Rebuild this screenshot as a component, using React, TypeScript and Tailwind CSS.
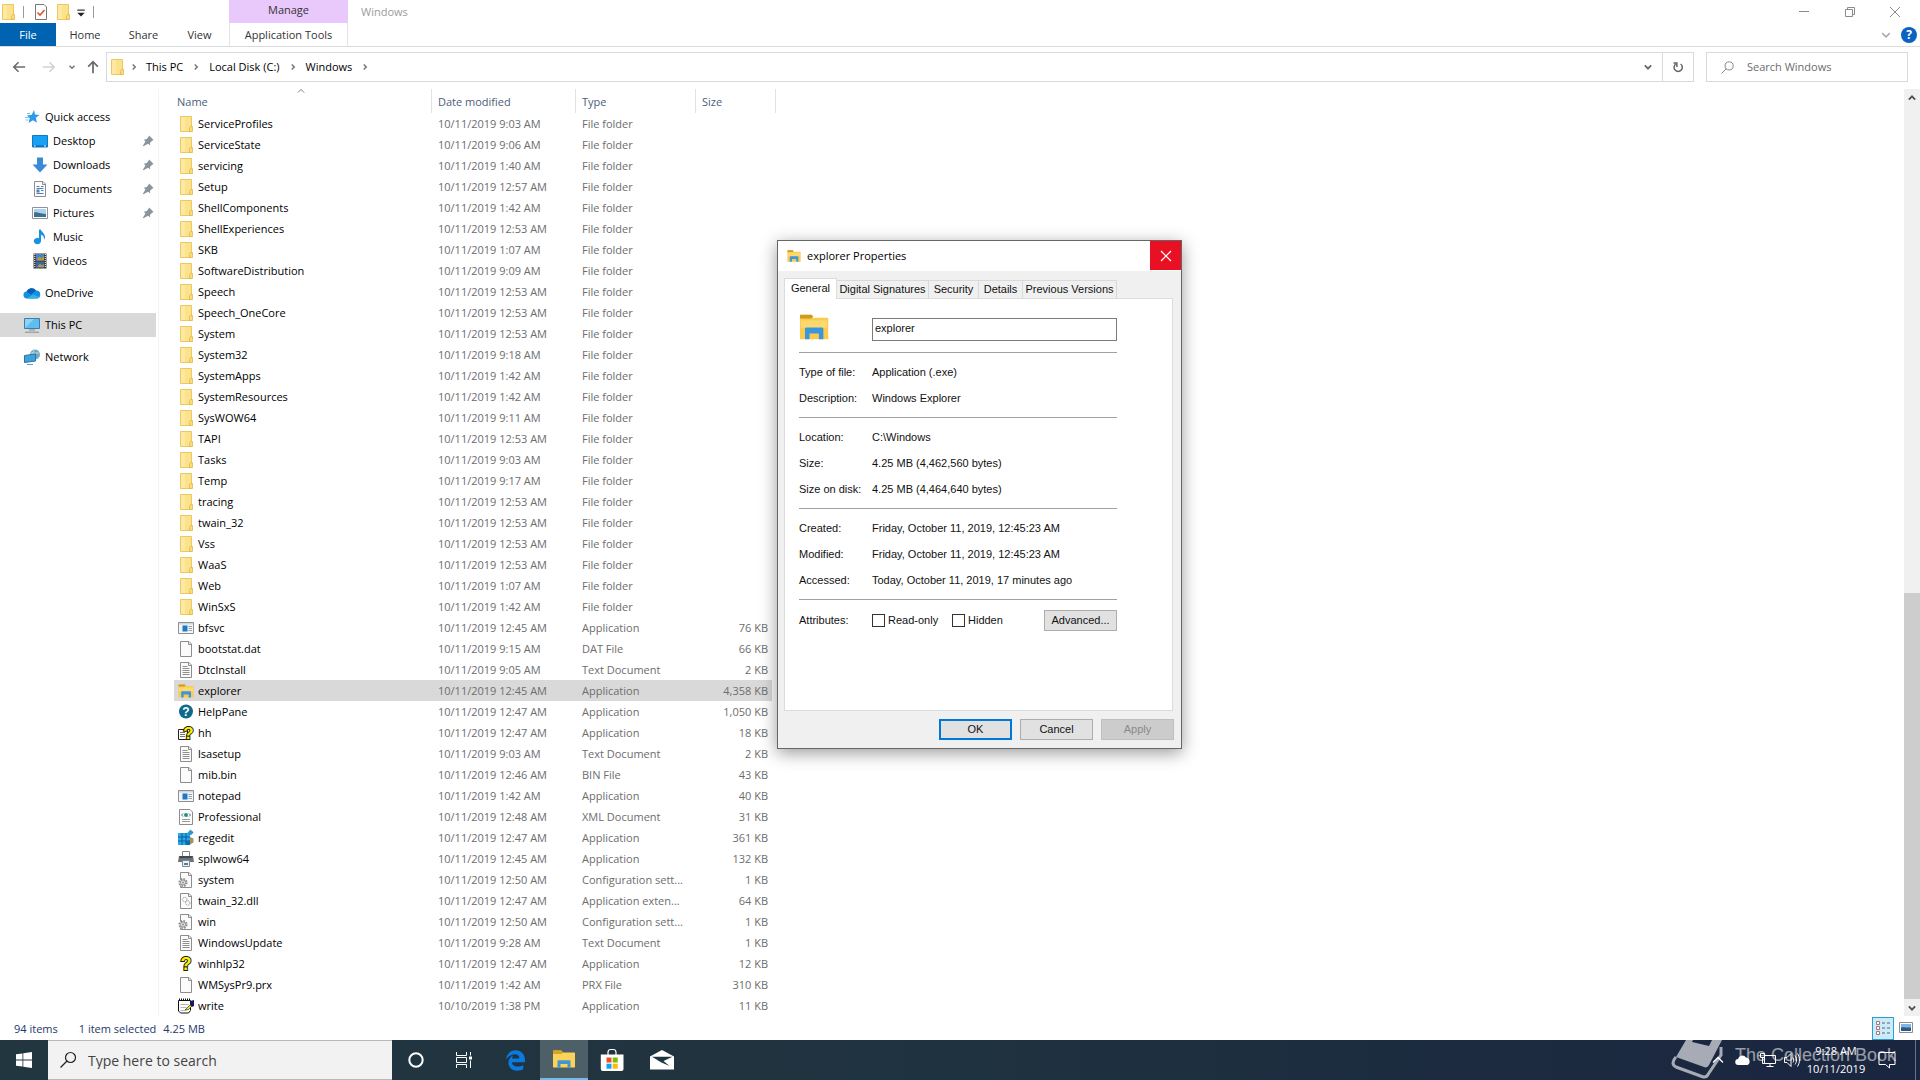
import type { ReactNode } from 'react';
import { FaEdgeLegacy } from 'react-icons/fa6';

type IconName =
  | 'folder' | 'app' | 'blank' | 'text' | 'explorer' | 'help' | 'hh' | 'xml'
  | 'regedit' | 'printer' | 'config' | 'dll' | 'question' | 'write';

type FileRow = { icon: IconName; name: string; date: string; type: string; size?: string };

const folder = (name: string, time: string): FileRow => ({
  icon: 'folder',
  name,
  date: `10/11/2019 ${time}`,
  type: 'File folder',
});

const files: FileRow[] = [
  folder('ServiceProfiles', '9:03 AM'),
  folder('ServiceState', '9:06 AM'),
  folder('servicing', '1:40 AM'),
  folder('Setup', '12:57 AM'),
  folder('ShellComponents', '1:42 AM'),
  folder('ShellExperiences', '12:53 AM'),
  folder('SKB', '1:07 AM'),
  folder('SoftwareDistribution', '9:09 AM'),
  folder('Speech', '12:53 AM'),
  folder('Speech_OneCore', '12:53 AM'),
  folder('System', '12:53 AM'),
  folder('System32', '9:18 AM'),
  folder('SystemApps', '1:42 AM'),
  folder('SystemResources', '1:42 AM'),
  folder('SysWOW64', '9:11 AM'),
  folder('TAPI', '12:53 AM'),
  folder('Tasks', '9:03 AM'),
  folder('Temp', '9:17 AM'),
  folder('tracing', '12:53 AM'),
  folder('twain_32', '12:53 AM'),
  folder('Vss', '12:53 AM'),
  folder('WaaS', '12:53 AM'),
  folder('Web', '1:07 AM'),
  folder('WinSxS', '1:42 AM'),
  { icon: 'app', name: 'bfsvc', date: '10/11/2019 12:45 AM', type: 'Application', size: '76 KB' },
  { icon: 'blank', name: 'bootstat.dat', date: '10/11/2019 9:15 AM', type: 'DAT File', size: '66 KB' },
  { icon: 'text', name: 'DtcInstall', date: '10/11/2019 9:05 AM', type: 'Text Document', size: '2 KB' },
  { icon: 'explorer', name: 'explorer', date: '10/11/2019 12:45 AM', type: 'Application', size: '4,358 KB' },
  { icon: 'help', name: 'HelpPane', date: '10/11/2019 12:47 AM', type: 'Application', size: '1,050 KB' },
  { icon: 'hh', name: 'hh', date: '10/11/2019 12:47 AM', type: 'Application', size: '18 KB' },
  { icon: 'text', name: 'lsasetup', date: '10/11/2019 9:03 AM', type: 'Text Document', size: '2 KB' },
  { icon: 'blank', name: 'mib.bin', date: '10/11/2019 12:46 AM', type: 'BIN File', size: '43 KB' },
  { icon: 'app', name: 'notepad', date: '10/11/2019 1:42 AM', type: 'Application', size: '40 KB' },
  { icon: 'xml', name: 'Professional', date: '10/11/2019 12:48 AM', type: 'XML Document', size: '31 KB' },
  { icon: 'regedit', name: 'regedit', date: '10/11/2019 12:47 AM', type: 'Application', size: '361 KB' },
  { icon: 'printer', name: 'splwow64', date: '10/11/2019 12:45 AM', type: 'Application', size: '132 KB' },
  { icon: 'config', name: 'system', date: '10/11/2019 12:50 AM', type: 'Configuration sett...', size: '1 KB' },
  { icon: 'dll', name: 'twain_32.dll', date: '10/11/2019 12:47 AM', type: 'Application exten...', size: '64 KB' },
  { icon: 'config', name: 'win', date: '10/11/2019 12:50 AM', type: 'Configuration sett...', size: '1 KB' },
  { icon: 'text', name: 'WindowsUpdate', date: '10/11/2019 9:28 AM', type: 'Text Document', size: '1 KB' },
  { icon: 'question', name: 'winhlp32', date: '10/11/2019 12:47 AM', type: 'Application', size: '12 KB' },
  { icon: 'blank', name: 'WMSysPr9.prx', date: '10/11/2019 1:42 AM', type: 'PRX File', size: '310 KB' },
  { icon: 'write', name: 'write', date: '10/10/2019 1:38 PM', type: 'Application', size: '11 KB' },
];

function Svg({ children, className = 'size-4' }: { children: ReactNode; className?: string }) {
  return (
    <svg viewBox="0 0 16 16" className={`${className} shrink-0 overflow-visible`} fill="none" aria-hidden="true">
      {children}
    </svg>
  );
}

function Chevron({ d, className, width = 2 }: { d: 'up' | 'down' | 'right'; className: string; width?: number }) {
  const paths = { up: 'M3 10.5 8 5.5l5 5', down: 'M3 5.5l5 5 5-5', right: 'M5.5 3l5 5-5 5' };
  return (
    <svg viewBox="0 0 16 16" className={`${className} shrink-0`} fill="none" aria-hidden="true">
      <path d={paths[d]} stroke="currentColor" strokeWidth={width} />
    </svg>
  );
}

function FolderIcon() {
  return (
    <Svg>
      <path d="M2.500 .5h11v15h-11z" fill="#fce28c" stroke="#ecc95f" />
      <path d="M3 1h4v14H3z" fill="#fde9a4" />
      <path d="M12.500 10.500h2v5h-3v-3z" fill="#fbdc77" stroke="#dfb84c" strokeWidth=".8" />
    </Svg>
  );
}

function ExplorerIcon({ className = 'size-4' }: { className?: string }) {
  return (
    <Svg className={className}>
      <path d="M.5 2.300c0-.6.3-.8.8-.8h5l1.200 1.500H15c.4 0 .6.3.6.700V14.500H.5z" fill="#fbcb4d" />
      <path d="M.5 1.900c0-.3.3-.500.600-.500h5.600l.9.900-1 1.200H.5z" fill="#cf9a1d" />
      <path d="M1 4.500h14v4H1z" fill="#fdd86f" />
      <path d="M3.200 14.500V9.200c0-.6.3-.9.900-.9h8c.6 0 .9.3.9.9v5.300h-2.400v-3H5.600v3z" fill="#3b97dd" />
    </Svg>
  );
}

function PageShape({ children }: { children?: ReactNode }) {
  return (
    <Svg>
      <path d="M2.500 .5h8.500l2.500 2.500v12.500h-11z" fill="#fbfbfb" stroke="#8d8d8d" />
      <path d="M10.500 .5v3h3" stroke="#8d8d8d" />
      {children}
    </Svg>
  );
}

function QuestionMark({ x, size }: { x: number; size: number }) {
  return (
    <text
      x={x}
      y="14"
      textAnchor="middle"
      fontFamily="Liberation Sans, sans-serif"
      fontWeight="700"
      fontSize={size}
      fill="#fff200"
      stroke="#1c1c00"
      strokeWidth="2"
      paintOrder="stroke"
    >
      ?
    </text>
  );
}

function FileIcon({ name }: { name: IconName }) {
  switch (name) {
    case 'folder':
      return <FolderIcon />;
    case 'explorer':
      return <ExplorerIcon />;
    case 'blank':
      return <PageShape />;
    case 'text':
      return (
        <PageShape>
          <path d="M4.500 4.500h5M4.500 6.500h7M4.500 8.500h7M4.500 10.500h7M4.500 12.500h7" stroke="#8f8f8f" />
        </PageShape>
      );
    case 'app':
      return (
        <Svg>
          <path d="M.5 2.500h15v11H.5z" fill="#f4f6f7" stroke="#8b9196" />
          <path d="M1 3h14v1.500H1z" fill="#cfd6dc" />
          <path d="M4.500 5.500h5v6h-5z" fill="#1f78c8" />
          <path d="M10.500 6.500h3.500M10.500 8.500h3.500M10.500 10.500h3.500" stroke="#8fa2b0" />
        </Svg>
      );
    case 'help':
      return (
        <Svg>
          <circle cx="8" cy="7.500" r="7" fill="#0d6a8a" />
          <text x="8" y="12" textAnchor="middle" fontFamily="Liberation Sans, sans-serif" fontWeight="700" fontSize="12" fill="#fff">?</text>
        </Svg>
      );
    case 'hh':
      return (
        <Svg>
          <path d="M.5 4.500h9v10h-9z" fill="#fff" stroke="#222" />
          <path d="M2 7.500h5M2 9.500h5M2 11.500h5" stroke="#777" />
          <QuestionMark x={10.500} size={17} />
        </Svg>
      );
    case 'question':
      return (
        <Svg>
          <QuestionMark x={8} size={18} />
        </Svg>
      );
    case 'xml':
      return (
        <Svg>
          <path d="M1.500 .5h10.500l2.500 2.500v12.500h-13z" fill="#fbfbfb" stroke="#8d8d8d" />
          <circle cx="8" cy="6" r="2" fill="#2f8f7c" />
          <path d="M5 4.500 3.500 6 5 7.500M11 4.500 12.500 6 11 7.500" stroke="#3b78a8" />
          <path d="M4 10.500h8M4 12.500h8" stroke="#9a9a9a" />
        </Svg>
      );
    case 'regedit':
      return (
        <Svg>
          <path d="M0 3h12v12H0z" fill="#28a8e8" />
          <path d="M4 3v12M8 3v12M0 7h12M0 11h12" stroke="#0b5e99" />
          <path d="m12.500 0 2.800 2.500-2.800 2.500L10 2.500z" fill="#2f9bd8" stroke="#0b5e99" strokeWidth=".5" />
          <path d="m12 7 3.500 1.500v4L12 14.500z" fill="#a89258" />
          <path d="M8 11h4v4H8z" fill="#0b6cae" />
        </Svg>
      );
    case 'printer':
      return (
        <Svg>
          <path d="M4.500 .5h7v5h-7z" fill="#fff" stroke="#888" />
          <path d="M1 5h14l1 6H0z" fill="#6d7378" />
          <path d="M1.500 5h13v2h-13z" fill="#44494d" />
          <path d="M4.500 9.500h7v6h-7z" fill="#e8f1f6" stroke="#888" />
          <path d="M6 12h4v2H6z" fill="#3f87b4" />
        </Svg>
      );
    case 'config':
      return (
        <PageShape>
          <circle cx="5" cy="10.500" r="3.700" fill="#eee" stroke="#8e8e8e" strokeWidth="1.800" strokeDasharray="1.600 1.300" />
          <circle cx="5" cy="10.500" r="2.600" fill="#e4e4e4" stroke="#8e8e8e" />
          <circle cx="5" cy="10.500" r="1" fill="#8e8e8e" />
        </PageShape>
      );
    case 'dll':
      return (
        <PageShape>
          <circle cx="6.800" cy="6.500" r="2.200" stroke="#93a0a8" strokeDasharray="1.300 .6" />
          <circle cx="9.800" cy="10" r="2.200" stroke="#93a0a8" strokeDasharray="1.300 .6" />
        </PageShape>
      );
    case 'write':
      return (
        <Svg>
          <path d="M.5 2.500h12v10l-2 2.500h-8l-2-2z" fill="#fff" stroke="#111" />
          <path d="M1 1.500h12" stroke="#111" strokeWidth="2" strokeDasharray="1 1" />
          <path d="M2.500 6.500h8M2.500 9.500h6M2.500 12.500h5" stroke="#b5b5b5" />
          <path d="m7 12 6-6 1.500 1.500-4 4z" fill="#f5e615" stroke="#111" strokeWidth=".6" />
          <path d="m12.500 3 3.500-1v6l-2 1-2-2z" fill="#17176e" />
        </Svg>
      );
  }
}

function PinIcon() {
  return (
    <svg viewBox="0 0 16 16" className="size-3 shrink-0" aria-hidden="true">
      <path d="M9.500 .5 15.500 6.500 13.500 7.500 11 10l-.5 3.500L8 11.500 2 15l-1-.5L4.500 8.500 2.500 6 6 5.500 8.500 2.500z" fill="#8b959d" />
    </svg>
  );
}

type NavItem = { label: string; icon: ReactNode; nested?: boolean; pinned?: boolean; active?: boolean };

const navGroups: NavItem[][] = [
  [
    {
      label: 'Quick access',
      icon: (
        <Svg>
          <path d="m10 1 1 4.500 4.500.5-3.700 2.800 1.200 5L9 11.200 4.500 14l1.300-5L3 6.500l4.800-.8z" fill="#2c9be8" />
          <path d="M1 8.500h4M1.500 11h3M3 4.500h3" stroke="#78c0f0" />
        </Svg>
      ),
    },
    {
      label: 'Desktop',
      nested: true,
      pinned: true,
      icon: (
        <Svg>
          <path d="M.5 2.500h15v11.500H.5z" fill="#18a0f5" stroke="#1277c4" />
          <path d="M1 13h14" stroke="#0b5fa5" />
          <path d="M2 13h1.500M12 13h2" stroke="#fff" />
        </Svg>
      ),
    },
    {
      label: 'Downloads',
      nested: true,
      pinned: true,
      icon: (
        <Svg>
          <path d="M5 .5h6v7h4.500L8 15.500.5 7.500H5z" fill="#3a8bd6" />
        </Svg>
      ),
    },
    {
      label: 'Documents',
      nested: true,
      pinned: true,
      icon: (
        <PageShape>
          <path d="M4.500 5.500h3M9 5.500h2.500M4.500 7.500h7M9 9.500h2.500M4.500 12.500h7" stroke="#4a84b8" />
          <path d="M4.500 8.500h3v3h-3z" fill="#4a84b8" />
        </PageShape>
      ),
    },
    {
      label: 'Pictures',
      nested: true,
      pinned: true,
      icon: (
        <Svg>
          <path d="M.5 2.500h15v11H.5z" fill="#fff" stroke="#8e9499" />
          <path d="M2 4h12v8H2z" fill="#a9d3ee" />
          <path d="M2 7.500c3-1 5 1 12 1.500v3H2z" fill="#3d6f8f" />
        </Svg>
      ),
    },
    {
      label: 'Music',
      nested: true,
      icon: (
        <Svg>
          <path d="M7 .5h1.800c.4 2.500 4.700 4 4.200 8.500-.3.8-.8 1.300-1 1.400.3-2.500-1.200-4-3-4.600V12a3.600 3.200 0 1 1-2-2.800z" fill="#1593e0" />
        </Svg>
      ),
    },
    {
      label: 'Videos',
      nested: true,
      icon: (
        <Svg>
          <path d="M1.500 .5h13v15h-13z" fill="#3a3a3a" />
          <path d="M4 1h8v6.500H4z" fill="#4a83c4" />
          <path d="M4 8.500h8V15H4z" fill="#3a63a8" />
          <path d="m5 6.500 2.500-3 2 2L12 3v4.500H5zM5 14l3-3.500 2 2 2-1.500v3z" fill="#b59b3b" />
          <path d="M2.800 1v14M13.300 1v14" stroke="#fff" strokeDasharray="1 1" />
        </Svg>
      ),
    },
  ],
  [
    {
      label: 'OneDrive',
      icon: (
        <Svg>
          <path d="M3.500 13.500A3.500 3.500 0 0 1 2.500 6.500 5.500 5.500 0 0 1 12 5.500 4 4 0 0 1 12.500 13.500z" fill="#1490df" />
          <path d="M2.500 6.500A5.500 5.500 0 0 1 12 5.500L7 9.500z" fill="#0a5fb4" />
          <path d="m3 13.500 6-4 6.500 2.500c-.5.900-1.600 1.500-3 1.500z" fill="#2eb1ee" />
        </Svg>
      ),
    },
  ],
  [
    {
      label: 'This PC',
      active: true,
      icon: (
        <Svg>
          <path d="M.5 1.500h15v10H.5z" fill="#5fbdf2" stroke="#3c7ea8" />
          <path d="M1 11V2h9z" fill="#8dd3f8" />
          <path d="M5 13h6M1 15.200h14" stroke="#8a8f93" />
        </Svg>
      ),
    },
  ],
  [
    {
      label: 'Network',
      icon: (
        <Svg>
          <circle cx="11" cy="5.500" r="5" fill="#6fa9c4" />
          <path d="M11 .5c-3 3-3 7 0 10M6.500 4h9" stroke="#c9e2ee" strokeWidth=".8" />
          <path d="M.5 6.500 11.500 5v7L.5 13.500z" fill="#3fa2dc" stroke="#2d749e" />
          <path d="M3 15.500h6" stroke="#57a4c9" />
        </Svg>
      ),
    },
  ],
];

const crumbs = ['This PC', 'Local Disk (C:)', 'Windows'];

function TitleBar() {
  return (
    <header className="grid grid-cols-[229px_119px_1fr] border-b border-[#dadbdc]">
      <div>
        <div className="flex h-[23px] items-center">
          <FolderIcon />
          <span className="ml-[7px] h-3 w-px bg-[#9a9a9a]" />
          <button type="button" aria-label="Properties" className="ml-[9px]">
            <Svg>
              <path d="M2.500 .5h8.500l2.500 2.500v12.500h-11z" fill="#fff" stroke="#777" />
              <path d="m4.500 8.500 2.500 2.500 4.500-5" stroke="#d8552c" strokeWidth="1.600" />
            </Svg>
          </button>
          <button type="button" aria-label="New folder" className="ml-[6px]">
            <FolderIcon />
          </button>
          <button type="button" aria-label="Customize toolbar" className="ml-1">
            <Svg className="size-3">
              <path d="M3 5.500h10" stroke="#222" strokeWidth="1.500" />
              <path d="M3 9h10l-5 5z" fill="#222" />
            </Svg>
          </button>
          <span className="ml-[6px] h-3 w-px bg-[#9a9a9a]" />
        </div>
        <nav className="flex h-[23px] text-center text-[#333]">
          <button type="button" className="w-14 bg-[#0063b1] text-white">File</button>
          <button type="button" className="w-[58px]">Home</button>
          <button type="button" className="w-[59px]">Share</button>
          <button type="button" className="w-[53px]">View</button>
        </nav>
      </div>
      <div className="text-center text-[#333]">
        <div className="h-[23px] bg-[#e9c9fb] leading-5">Manage</div>
        <button type="button" className="h-[23px] w-full border-x border-[#e6e0ea] whitespace-nowrap">Application Tools</button>
      </div>
      <div>
        <div className="flex h-[23px] items-center justify-between">
          <h1 className="pl-[13px] text-[#9b9b9b]">Windows</h1>
          <div className="flex pr-[2px] text-[#8a8a8a]">
            <button type="button" aria-label="Minimize" className="flex w-[46px] justify-center">
              <svg viewBox="0 0 12 12" className="size-3"><path d="M1 5.500h10" stroke="currentColor" /></svg>
            </button>
            <button type="button" aria-label="Restore" className="flex w-[45px] justify-center">
              <svg viewBox="0 0 12 12" className="size-3" fill="none">
                <path d="M1.500 3.500h7v7h-7zM3.500 3.500v-2h7v7h-2" stroke="currentColor" />
              </svg>
            </button>
            <button type="button" aria-label="Close" className="flex w-[46px] justify-center">
              <svg viewBox="0 0 12 12" className="size-3"><path d="m1 1 10 10M11 1 1 11" stroke="currentColor" /></svg>
            </button>
          </div>
        </div>
        <div className="flex h-[23px] items-center justify-end gap-[9px] pr-[3px]">
          <button type="button" aria-label="Expand ribbon">
            <Chevron d="down" className="size-3 text-[#aaa]" />
          </button>
          <button type="button" aria-label="Help" className="size-4 rounded-full bg-[#0b62c0] text-xs leading-4 font-bold text-white">?</button>
        </div>
      </div>
    </header>
  );
}

function AddressBar() {
  return (
    <div className="flex h-[42px] items-center pt-[5px] pr-3 pb-[7px] leading-4">
      <div className="flex w-[106px] shrink-0 items-center pl-3 text-[#777]">
        <button type="button" aria-label="Back">
          <Svg className="size-[14px]"><path d="M7.500 2.500 2 8l5.500 5.500M2 8h13" stroke="#6b6b6b" strokeWidth="1.800" /></Svg>
        </button>
        <button type="button" aria-label="Forward" className="ml-4">
          <Svg className="size-[14px]"><path d="M8.500 2.500 14 8l-5.500 5.500M14 8H1" stroke="#d2d2d2" strokeWidth="1.800" /></Svg>
        </button>
        <button type="button" aria-label="Recent locations" className="ml-3">
          <Chevron d="down" className="size-2" width={3} />
        </button>
        <button type="button" aria-label="Up" className="ml-[10px]">
          <Svg className="size-[14px]"><path d="M2.500 7.500 8 2l5.500 5.500M8 2v13" stroke="#6b6b6b" strokeWidth="2" /></Svg>
        </button>
      </div>
      <div className="flex h-[30px] flex-1 items-center border border-[#d9d9d9]">
        <span className="ml-[2px]"><FolderIcon /></span>
        <ol className="ml-[5px] flex flex-1 items-center">
          <li className="mr-2"><Chevron d="right" className="size-2 text-[#777]" width={3} /></li>
          {crumbs.map((crumb) => (
            <li key={crumb} className="flex items-center">
              <a href="#" className="mr-[9px]">{crumb}</a>
              <Chevron d="right" className="mr-[9px] size-2 text-[#777]" width={3} />
            </li>
          ))}
        </ol>
        <button type="button" aria-label="Previous locations" className="flex w-7 justify-center">
          <Chevron d="down" className="size-[10px] text-[#666]" width={3} />
        </button>
        <button type="button" aria-label="Refresh" className="flex h-full w-[31px] items-center justify-center border-l border-[#d9d9d9]">
          <Svg className="size-3">
            <path d="M11.500 4A5.500 5.500 0 1 1 5 4M2 2.500h4.500V8" stroke="#666" strokeWidth="2" />
          </Svg>
        </button>
      </div>
      <label className="ml-3 flex h-[30px] w-[202px] items-center border border-[#d9d9d9]">
        <Svg className="ml-[14px] size-[13px]">
          <circle cx="10" cy="6" r="5" stroke="#888" strokeWidth="1.200" />
          <path d="m6.500 9.500-6 6" stroke="#888" strokeWidth="1.200" />
        </Svg>
        <input type="text" aria-label="Search Windows" placeholder="Search Windows" className="ml-[13px] w-36 outline-none placeholder:text-[#6d6d6d]" />
      </label>
    </div>
  );
}

function Sidebar() {
  return (
    <nav className="flex w-[159px] shrink-0 flex-col gap-2 border-r border-[#f3f3f3] pt-4 pr-[2px] leading-4">
      {navGroups.map((group) => (
        <ul key={group[0].label}>
          {group.map((item) => (
            <li key={item.label}>
              <a
                href="#"
                className={`flex h-6 items-center gap-[5px] pr-[2px] ${item.nested ? 'pl-8' : 'pl-6'} ${item.active ? 'bg-[#d9d9d9]' : ''}`}
              >
                {item.icon}
                <span className="flex-1">{item.label}</span>
                {item.pinned && <PinIcon />}
              </a>
            </li>
          ))}
        </ul>
      ))}
    </nav>
  );
}

function FileTable() {
  return (
    <div className="min-w-0 flex-1 overflow-hidden pl-[15px]">
      <table className="w-[602px] table-fixed border-separate border-spacing-0">
        <colgroup>
          <col className="w-[258px]" />
          <col className="w-[144px]" />
          <col className="w-[120px]" />
          <col className="w-[76px]" />
          <col className="w-1" />
        </colgroup>
        <thead>
          <tr className="h-6 text-left text-[#4c607a]">
            <th className="relative border-r border-[#e2e2e2] p-0 pl-[3px] font-normal">
              Name
              <Chevron d="up" className="absolute top-[-3px] left-[122px] size-[10px] text-[#777]" width={1.5} />
            </th>
            <th className="border-r border-[#e2e2e2] p-0 pl-[6px] font-normal">Date modified</th>
            <th className="border-r border-[#e2e2e2] p-0 pl-[6px] font-normal">Type</th>
            <th colSpan={2} className="border-r border-[#e2e2e2] p-0 pl-[6px] font-normal">Size</th>
          </tr>
        </thead>
        <tbody>
          {files.map((file) => {
            const cell = file.name === 'explorer' ? 'bg-[#d9d9d9]' : '';
            return (
              <tr key={file.name} className="h-[21px] text-[#6d6d6d]">
                <td className={`p-0 pl-1 text-black ${cell}`}>
                  <span className="flex items-center gap-1">
                    <FileIcon name={file.icon} />
                    {file.name}
                  </span>
                </td>
                <td className={`p-0 pl-[6px] ${cell}`}>{file.date}</td>
                <td className={`p-0 pl-[6px] whitespace-nowrap ${cell}`}>{file.type}</td>
                <td className={`p-0 pr-1 text-right ${cell}`}>{file.size}</td>
                <td className="p-0" />
              </tr>
            );
          })}
        </tbody>
      </table>
    </div>
  );
}

function ScrollBar() {
  return (
    <div className="flex w-4 shrink-0 flex-col bg-[#f0f0f0]">
      <button type="button" aria-label="Scroll up" className="flex h-[17px] items-center justify-center">
        <Chevron d="up" className="size-[10px] text-[#505050]" width={3} />
      </button>
      <div className="flex-[6]" />
      <div className="flex-[5] bg-[#cdcdcd]" />
      <button type="button" aria-label="Scroll down" className="flex h-[17px] items-center justify-center">
        <Chevron d="down" className="size-[10px] text-[#505050]" width={3} />
      </button>
    </div>
  );
}

function StatusBar() {
  return (
    <footer className="flex h-6 items-center text-[#26376b]">
      <span className="ml-[14px]">94 items</span>
      <span className="ml-[21px]">1 item selected</span>
      <span className="ml-[7px]">4.25 MB</span>
      <button type="button" aria-label="Details view" className="ml-auto flex h-[23px] w-[22px] items-center justify-center border border-[#2a9fd0] bg-[#cdeaf8]">
        <Svg>
          <path d="M1.500 1.500h3v3h-3zM1.500 6.500h3v3h-3zM1.500 11.500h3v3h-3z" fill="#fff" stroke="#a8767a" />
          <path d="M7 3h3M12 3h3M7 8h3M12 8h3M7 13h3M12 13h3" stroke="#4d6a78" />
        </Svg>
      </button>
      <button type="button" aria-label="Large icons view" className="mr-[6px] ml-1">
        <Svg>
          <path d="M1.500 2.500h13v10h-13z" fill="#fff" stroke="#8d8d8d" />
          <path d="M3 4h10v7H3z" fill="#7fb6e8" />
          <path d="M3 7.500c3-1 5 .5 10 0V11H3z" fill="#2e5a82" />
        </Svg>
      </button>
    </footer>
  );
}

const propertyGroups = [
  [
    ['Type of file:', 'Application (.exe)'],
    ['Description:', 'Windows Explorer'],
  ],
  [
    ['Location:', 'C:\\Windows'],
    ['Size:', '4.25 MB (4,462,560 bytes)'],
    ['Size on disk:', '4.25 MB (4,464,640 bytes)'],
  ],
  [
    ['Created:', 'Friday, October 11, 2019, 12:45:23 AM'],
    ['Modified:', 'Friday, October 11, 2019, 12:45:23 AM'],
    ['Accessed:', 'Today, October 11, 2019, 17 minutes ago'],
  ],
];

const dialogTabs = [
  { label: 'Digital Signatures', width: 'w-[92px]' },
  { label: 'Security', width: 'w-[50px]' },
  { label: 'Details', width: 'w-[44px]' },
  { label: 'Previous Versions', width: 'w-[94px]' },
];

function PropertiesDialog() {
  return (
    <section
      role="dialog"
      aria-labelledby="dialog-title"
      className="absolute top-[240px] left-[777px] w-[405px] border border-[#666] bg-[#f0f0f0] shadow-[0_4px_16px_rgba(0,0,0,0.4)]"
    >
      <div className="flex h-[30px] items-center bg-white pl-[9px] leading-4">
        <ExplorerIcon className="size-[14px]" />
        <h2 id="dialog-title" className="ml-[6px] flex-1">explorer Properties</h2>
        <button type="button" aria-label="Close" className="flex h-[29px] w-[31px] items-center justify-center self-start bg-[#e81123]">
          <svg viewBox="0 0 12 12" className="size-3"><path d="m1 1 10 10M11 1 1 11" stroke="#fff" strokeWidth="1.200" /></svg>
        </button>
      </div>
      <div className="px-[6px] pt-[7px] pb-2 font-['Liberation_Sans',sans-serif] text-[11px] text-[#111]">
        <div role="tablist" className="flex h-5 items-end">
          <button type="button" role="tab" aria-selected="true" className="relative -mb-px h-[21px] w-[53px] border border-b-0 border-[#dcdcdc] bg-white pb-[2px]">General</button>
          {dialogTabs.map((tab) => (
            <button key={tab.label} type="button" role="tab" aria-selected="false" className={`h-[18px] border border-b-0 border-l-0 border-[#d9d9d9] whitespace-nowrap ${tab.width}`}>
              {tab.label}
            </button>
          ))}
        </div>
        <div className="mr-[2px] h-[413px] border border-[#dcdcdc] bg-white pr-[55px] pl-[14px]">
          <div className="flex h-[53px] items-start pt-[13px]">
            <ExplorerIcon className="size-[30px]" />
            <input
              type="text"
              aria-label="File name"
              defaultValue="explorer"
              className="mt-[6px] ml-[43px] h-[23px] min-w-0 flex-1 border border-[#7a7a7a] px-[2px] pb-1 outline-none"
            />
          </div>
          {propertyGroups.map((group, index) => (
            <dl key={index} className="border-t border-[#a0a0a0] py-[6px]">
              {group.map(([label, value]) => (
                <div key={label} className="flex h-[26px] items-center">
                  <dt className="w-[73px]">{label}</dt>
                  <dd className="whitespace-nowrap">{value}</dd>
                </div>
              ))}
            </dl>
          ))}
          <div className="flex items-center border-t border-[#a0a0a0] pt-[10px]">
            <span className="w-[73px]">Attributes:</span>
            <label className="flex w-20 items-center gap-[3px]">
              <input type="checkbox" className="size-[13px] appearance-none border border-[#333] bg-white" />
              Read-only
            </label>
            <label className="flex items-center gap-[3px]">
              <input type="checkbox" className="size-[13px] appearance-none border border-[#333] bg-white" />
              Hidden
            </label>
            <button type="button" className="ml-auto h-[21px] w-[73px] border border-[#adadad] bg-[#e1e1e1]">Advanced...</button>
          </div>
        </div>
        <div className="flex justify-end gap-2 pt-2 pr-px">
          <button type="button" className="h-[21px] w-[73px] border-2 border-[#0078d7] bg-[#e1e1e1]">OK</button>
          <button type="button" className="h-[21px] w-[73px] border border-[#adadad] bg-[#e1e1e1]">Cancel</button>
          <button type="button" disabled className="h-[21px] w-[73px] border border-[#bfbfbf] bg-[#cccccc] text-[#8a8a8a]">Apply</button>
        </div>
      </div>
    </section>
  );
}

function Taskbar() {
  return (
    <div className="relative flex h-10 shrink-0 bg-linear-to-r from-[#22363f] via-[#1f323f] to-[#1a2540] text-white">
      <button type="button" aria-label="Start" className="flex w-12 items-center justify-center">
        <svg viewBox="0 0 16 16" className="size-4" fill="#fff">
          <path d="M0 2.300 6.500 1.400v6.200H0zM7.300 1.300 16 0v7.600H7.300zM0 8.400h6.500v6.200L0 13.700zM7.300 8.400H16V16l-8.700-1.300z" />
        </svg>
      </button>
      <label className="flex w-[344px] items-center border-y border-[#b8b8b8] bg-[#f2f2f2]">
        <Svg className="ml-3 size-4">
          <circle cx="10.500" cy="5.500" r="5" stroke="#222" strokeWidth="1.200" />
          <path d="M7 9 .5 15.500" stroke="#222" strokeWidth="1.200" />
        </Svg>
        <input type="text" aria-label="Search" placeholder="Type here to search" className="ml-3 flex-1 text-[14px] outline-none placeholder:text-[#444]" />
      </label>
      <button type="button" aria-label="Cortana" className="flex w-12 items-center justify-center">
        <svg viewBox="0 0 16 16" className="size-4"><circle cx="8" cy="8" r="6.700" fill="none" stroke="#fff" strokeWidth="2" /></svg>
      </button>
      <button type="button" aria-label="Task View" className="flex w-12 items-center justify-center">
        <Svg>
          <path d="M.5 0v3.500h10V0M.5 16v-3.500h10V16M.5 5.500h10v5H.5zM14.500 0v3.500M14.500 8.500V16" stroke="#fff" />
          <path d="M13 4.500h3v3h-3z" fill="#fff" />
        </Svg>
      </button>
      <button type="button" aria-label="Microsoft Edge" className="ml-[3px] flex w-12 items-center justify-center">
        <FaEdgeLegacy className="size-[21px] text-[#0a7ae0]" />
      </button>
      <button type="button" aria-label="File Explorer" className="ml-px flex w-12 items-center justify-center border-b-2 border-[#76b9ed] bg-[#4d5f67]">
        <svg viewBox="0 0 22 18" className="h-[18px] w-[22px]">
          <path d="M0 1.500C0 .8.400.5 1 .5h7l2 2h11c.6 0 1 .4 1 1V17.500H0z" fill="#fbd25a" />
          <path d="M0 .5h8.500l1.500 2-1.500 1.500H0z" fill="#d8a422" />
          <path d="M4.500 17.500v-6c0-.8.4-1.200 1.200-1.200h10.600c.8 0 1.200.4 1.200 1.200v6h-3v-3.500h-7v3.500z" fill="#4296cf" />
        </svg>
      </button>
      <button type="button" aria-label="Microsoft Store" className="flex w-12 items-center justify-center">
        <svg viewBox="0 0 24 24" className="size-6" fill="none">
          <path d="M8 7V4.500C8 2.800 9 1.500 10.500 1.500h3C15 1.500 16 2.800 16 4.500V7" stroke="#fff" strokeWidth="1.200" />
          <path d="M.8 6.500h22.700v14.500c0 1-.8 2-2 2H2.800c-1.200 0-2-1-2-2z" fill="#fff" />
          <path d="M6.500 9.500h5v5h-5z" fill="#e8502a" />
          <path d="M12.700 9.500h5v5h-5z" fill="#7fb900" />
          <path d="M6.500 15.700h5v5h-5z" fill="#12a5ee" />
          <path d="M12.700 15.700h5v5h-5z" fill="#fdb813" />
        </svg>
      </button>
      <button type="button" aria-label="Mail" className="ml-[2px] flex w-12 items-center justify-center">
        <svg viewBox="0 0 24 20" className="h-5 w-6">
          <path d="M0 6.500 12 0l12 6.500V19.500H0z" fill="#fff" />
          <path d="M2 6.700h20.500L13.500 11l6 5L11 12.200z" fill="#20343f" />
        </svg>
      </button>

      <div className="pointer-events-none absolute right-6 bottom-0 flex h-10 items-start gap-[10px] text-white/55">
        <svg viewBox="0 0 54 40" className="h-10 w-[54px]">
          <path d="M15 0h36L38 25c-1 2-3 3-5 2L5 17z" fill="#a7abb6" />
          <path d="M22 0h19l-3 6-17-4z" fill="#1b2741" />
          <path d="M5 17C1 21 1 25 5 27l26 9.500c3 1 5 0 6-2L50 15V7" fill="none" stroke="#a7abb6" strokeWidth="3" />
          <path d="m8 21.500 24 9" stroke="#1b2741" strokeWidth="2" />
        </svg>
        <span className="font-['Liberation_Sans',sans-serif] text-lg leading-[30px]">The Collection Book</span>
      </div>

      <div className="relative ml-auto flex items-center">
        <button type="button" aria-label="Show hidden icons" className="mr-[9px]">
          <Chevron d="up" className="size-4" width={1.3} />
        </button>
        <Svg className="mr-[9px] size-4">
          <path d="M3.500 13a3 3 0 0 1-.5-6A4.500 4.500 0 0 1 11 5.500A4 4 0 0 1 12.500 13z" fill="#fff" />
        </Svg>
        <Svg className="mr-2 size-4">
          <path d="M4.500 3.500h11v8h-11zM10 11.500v3M6.500 14.500h7M.5 1.500h4v4h-4zM2.500 5.500v6h2" stroke="#fff" />
        </Svg>
        <Svg className="mr-1 size-4">
          <path d="M.5 5.500H3l4-4v13l-4-4H.5z" stroke="#fff" />
          <path d="M9 5.500c1 1.500 1 3.500 0 5M11 3.500c2 3 2 6 0 9M13.500 1.500c2.600 4 2.600 9 0 13" stroke="#fff" />
        </Svg>
        <time className="w-16 text-center leading-[18px]">
          9:28 AM
          <br />
          10/11/2019
        </time>
        <button type="button" aria-label="Notifications" className="mr-[19px] ml-[10px] flex">
          <svg viewBox="0 0 18 18" className="size-[18px]" fill="none">
            <path d="M1 1.500h16v12h-5.500V17l-4-3.500H1z" stroke="#fff" />
          </svg>
        </button>
        <span className="mr-1 h-10 w-px bg-[#6b7484]" />
      </div>
    </div>
  );
}

export default function App() {
  return (
    <div className="relative flex h-screen flex-col overflow-hidden bg-white font-['Open_Sans',sans-serif] text-[11px] leading-[17px] text-black">
      <TitleBar />
      <AddressBar />
      <main className="flex min-h-0 flex-1">
        <Sidebar />
        <FileTable />
        <ScrollBar />
      </main>
      <StatusBar />
      <Taskbar />
      <PropertiesDialog />
    </div>
  );
}
